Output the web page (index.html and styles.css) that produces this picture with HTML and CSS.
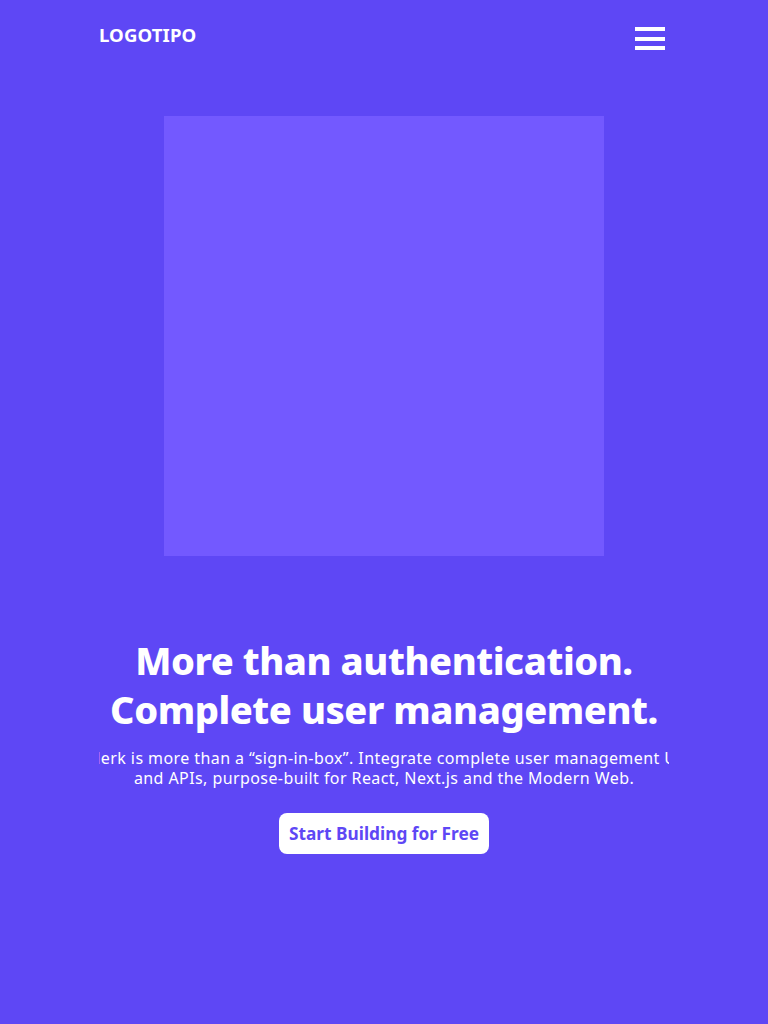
FILE: index.html
```html
<!DOCTYPE html>
<html lang="en">
<head>
<meta charset="utf-8">
<title>Logotipo</title>
<link rel="stylesheet" href="styles.css">
</head>
<body>
<div class="page">
  <header class="nav">
    <a class="logo" href="#">LOGOTIPO</a>
    <button class="menu" aria-label="Menu">
      <span></span><span></span><span></span>
    </button>
  </header>
  <div class="media"><div class="placeholder"></div></div>
  <section class="hero">
    <h1>More than authentication.<br>Complete user management.</h1>
    <div class="lead-clip">
      <p class="lead">Clerk is more than a “sign-in-box”. Integrate complete user management UI and APIs, purpose-built for React, Next.js and the Modern Web.</p>
    </div>
    <a class="cta" href="#">Start Building for Free</a>
  </section>
</div>
</body>
</html>
```

FILE: styles.css
```css
* { box-sizing: border-box; }
html, body { margin: 0; padding: 0; }
body {
  background: #5e47f5;
  color: #fff;
  font-family: "Noto Sans", "Open Sans", sans-serif;
  min-height: 1024px;
}
.page {
  width: 570px;
  margin: 0 auto;
}
.nav {
  display: flex;
  justify-content: space-between;
  align-items: flex-start;
  padding-top: 22px;
  height: 56px;
}
.logo {
  color: #fff;
  text-decoration: none;
  font-weight: 700;
  font-size: 18.6px;
  line-height: 25px;
  letter-spacing: 0.1px;
}
.menu {
  background: none;
  border: 0;
  padding: 0;
  margin-right: 4px;
  margin-top: 5px;
  width: 30px;
  display: flex;
  flex-direction: column;
  gap: 5.5px;
  cursor: pointer;
}
.menu span {
  display: block;
  height: 4px;
  background: #fff;
}
.media {
  display: flex;
  justify-content: center;
  padding-top: 60px;
}
.placeholder {
  width: 440px;
  height: 440px;
  background: #7359ff;
}
.hero {
  display: flex;
  flex-direction: column;
  align-items: center;
  text-align: center;
  padding-top: 80px;
}
h1 {
  margin: 0;
  font-size: 38px;
  line-height: 49px;
  font-weight: 800;
  letter-spacing: -0.45px;
}
.lead-clip {
  width: 570px;
  overflow: hidden;
  display: flex;
  justify-content: center;
  margin-top: 14px;
}
.lead {
  flex: none;
  width: 610px;
  margin: 0;
  font-size: 16px;
  line-height: 20px;
  letter-spacing: 0.42px;
}
.cta {
  margin-top: 25px;
  background: #fff;
  color: #5e47f5;
  text-decoration: none;
  font-weight: 700;
  font-size: 17.3px;
  line-height: 41px;
  height: 41px;
  padding: 0 9.5px;
  border-radius: 8px;
}
```
